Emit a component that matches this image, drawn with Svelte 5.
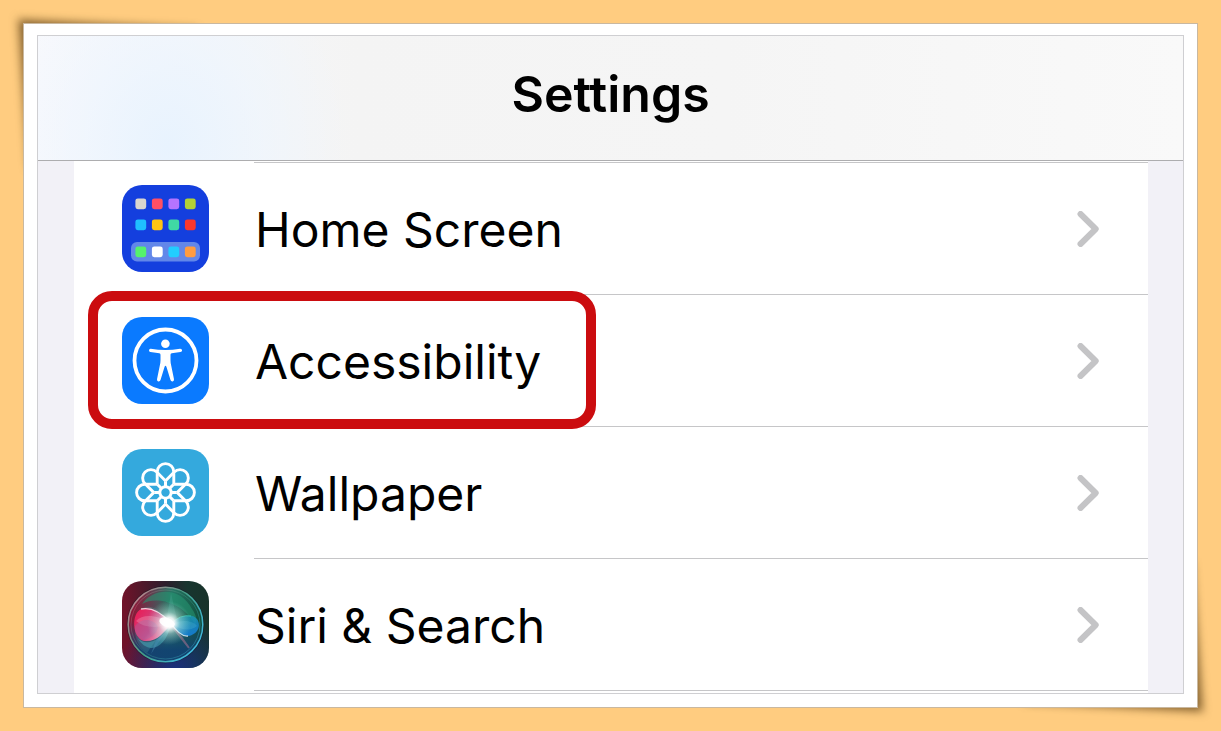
<script lang="ts">
	const apps = [
		{ id: 'home', label: 'Home Screen', highlighted: false },
		{ id: 'accessibility', label: 'Accessibility', highlighted: true },
		{ id: 'wallpaper', label: 'Wallpaper', highlighted: false },
		{ id: 'siri', label: 'Siri & Search', highlighted: false }
	];

	const dots = [
		['#d9d6cf', '#ff4f64', '#b574ff', '#b2d235'],
		['#1fbfff', '#ffc412', '#40d9a4', '#fb372d'],
		['#55f26c', '#ffffff', '#22cdff', '#ff9c40']
	];
	const dotRows = [13.4, 34.4, 61.4];
	const petals = [0, 45, 90, 135, 180, 225, 270, 315];
</script>

<main class="frame">
	<div class="photo">
		<div class="screen">
			<header class="title-bar">
				<h1>Settings</h1>
			</header>
			<nav class="settings" aria-label="Settings">
				<ul class="list">
					{#each apps as app}
						<li>
							<a class="row" class:highlighted={app.highlighted} href={`#${app.id}`}>
								<svg class="icon" viewBox="0 0 87 87" aria-hidden="true">
									{#if app.id === 'home'}
										<rect width="87" height="87" fill="#143fde" />
										<rect x="9" y="57" width="69" height="19.6" rx="6" fill="#6287e9" />
										{#each dots as line, r}
											{#each line as color, c}
												<rect
													x={13.4 + c * 16.5}
													y={dotRows[r]}
													width="10.8"
													height="10.8"
													rx="2.4"
													fill={color}
												/>
											{/each}
										{/each}
									{:else if app.id === 'accessibility'}
										<rect width="87" height="87" fill="#0a7aff" />
										<circle cx="43.5" cy="43.5" r="31" fill="none" stroke="#fff" stroke-width="3.8" />
										<circle cx="43.4" cy="26.7" r="4.3" fill="#fff" />
										<path
											fill="#fff"
											d="M28.7 31.8 Q43.5 34.2 58.1 31.8 Q60 31.7 60.1 33.3 Q60.1 34.7 58.5 35 L49.7 36.3 Q48.5 36.5 48.5 37.8 V43.5 Q48.5 46 49.3 49 L52 62.3 Q52.2 64 50.6 64.4 Q49 64.6 48.5 63 L44.4 49.7 Q43.5 47.6 42.6 49.7 L38.5 63 Q37.9 64.7 36.3 64.4 Q34.8 64 35 62.3 L37.7 49 Q38.5 46 38.5 43.5 V37.8 Q38.5 36.5 37.3 36.3 L28.4 35 Q26.9 34.7 27 33.3 Q27.1 31.7 28.7 31.8 Z"
										/>
									{:else if app.id === 'wallpaper'}
										<rect width="87" height="87" fill="#34a9dd" />
										<g fill="none" stroke="#fff" stroke-width="2.9" stroke-linejoin="round">
											{#each petals as angle}
												<g transform={`rotate(${angle} 43.5 43.5)`}>
													<path d="M35.2 35.4 V22.9 a8.3 8.3 0 0 1 16.6 0 V35.4" />
													<path d="M43.5 38 V32.2" stroke-width="3" />
												</g>
											{/each}
											<circle cx="43.5" cy="43.5" r="5.7" stroke-width="3" />
										</g>
									{:else}
										<defs>
											<linearGradient id="siri-bg" x1="0" y1="0.1" x2="1" y2="0">
												<stop offset="0" stop-color="#701329" />
												<stop offset="0.5" stop-color="#2d1e2c" />
												<stop offset="0.75" stop-color="#18352f" />
												<stop offset="1" stop-color="#183229" />
											</linearGradient>
											<radialGradient id="siri-low" cx="0.6" cy="1.05" r="0.65">
												<stop offset="0" stop-color="#16348a" stop-opacity="0.9" />
												<stop offset="1" stop-color="#16318a" stop-opacity="0" />
											</radialGradient>
											<linearGradient id="siri-orb" x1="0.05" y1="0.4" x2="0.95" y2="0.5">
												<stop offset="0" stop-color="#8c1838" />
												<stop offset="0.3" stop-color="#584653" />
												<stop offset="0.55" stop-color="#267765" />
												<stop offset="1" stop-color="#12513f" />
											</linearGradient>
											<linearGradient id="siri-orb-low" x1="0" y1="0" x2="0" y2="1">
												<stop offset="0.45" stop-color="#154371" stop-opacity="0" />
												<stop offset="0.85" stop-color="#114271" stop-opacity="0.95" />
											</linearGradient>
											<linearGradient id="siri-rim" x1="0" y1="0.1" x2="1" y2="0.8">
												<stop offset="0" stop-color="#d27c8d" />
												<stop offset="0.5" stop-color="#439e86" />
												<stop offset="1" stop-color="#3fbdea" />
											</linearGradient>
											<linearGradient id="siri-pink" x1="0" y1="0" x2="1" y2="0.6">
												<stop offset="0" stop-color="#ed174f" />
												<stop offset="0.6" stop-color="#cf4582" />
												<stop offset="1" stop-color="#f7a8c3" />
											</linearGradient>
											<linearGradient id="siri-blue" x1="0" y1="0" x2="0.4" y2="1">
												<stop offset="0" stop-color="#1e9a9f" />
												<stop offset="1" stop-color="#1583db" />
											</linearGradient>
											<radialGradient id="siri-glow">
												<stop offset="0" stop-color="#fff" />
												<stop offset="0.25" stop-color="#fff" stop-opacity="0.9" />
												<stop offset="0.5" stop-color="#e4fff8" stop-opacity="0.4" />
												<stop offset="1" stop-color="#a8eadd" stop-opacity="0" />
											</radialGradient>
										</defs>
										<rect width="87" height="87" fill="url(#siri-bg)" />
										<rect width="87" height="87" fill="url(#siri-low)" />
										<circle cx="43.5" cy="43.5" r="38.8" fill="#101725" opacity="0.5" />
										<circle cx="43.5" cy="43.5" r="37" fill="url(#siri-orb)" />
										<circle cx="43.5" cy="43.5" r="37" fill="url(#siri-orb-low)" />
										<path d="M20 23 C31 7 58 5 70 28 C75 35 75 40 73 44 C65 26 38 13 20 23 Z" fill="#269873" opacity="0.55" />
										<path d="M13 45 C11 22 36 18 44 42 L49 12 Q53 30 56 43 L43 46 L25 72 C16 66 12 56 13 45 Z" fill="#66bbae" opacity="0.2" />
										<path d="M15 56 C24 68 40 58 49 44 C42 71 24 73 15 56 Z" fill="#48b0bd" opacity="0.5" />
										<path d="M49 43 C41 31 28 25 19 28 C9 33 10 57 22 60 C36 61 42 51 49 43 Z" fill="url(#siri-pink)" />
										<path d="M14 40 C21 32 36 34 48 42 C37 48 22 47 14 40 Z" fill="#f5a2bc" opacity="0.35" />
										<path d="M13 45 C20 36 32 38 36 46 Q34 56 22 59 C15 57 12 50 13 45 Z" fill="#9a6fac" opacity="0.35" />
										<path d="M49 43 C58 34 70 32 75 38 C81 47 72 56 64 55 C57 54 53 48 49 43 Z" fill="url(#siri-blue)" opacity="0.85" />
										<path d="M51 43 C60 38 71 40 75 45 C67 51 58 49 51 43 Z" fill="#68cbe3" opacity="0.2" />
										<path d="M49 44 L67 67 L60 57 Z" fill="#cf7a9b" stroke="#cf7a9b" stroke-width="2" opacity="0.45" />
										<path d="M48 44 L29 73 L34 59 Z" fill="#4b92ba" opacity="0.4" />
										<path d="M19 28 Q33 25 48 41 Q58 56 66 55" fill="none" stroke="#fff" stroke-width="1.3" opacity="0.75" />
										<path d="M49 43 Q58 33 69 35" fill="none" stroke="#36ceb7" stroke-width="0.9" opacity="0.8" />
										<circle cx="47" cy="42" r="22" fill="url(#siri-glow)" />
										<ellipse cx="45" cy="41.5" rx="8" ry="4.6" fill="#fff" transform="rotate(20 45 41.5)" opacity="0.9" />
										<circle cx="43.5" cy="43.5" r="37.3" fill="none" stroke="url(#siri-rim)" stroke-width="1.5" />
										<circle cx="43.5" cy="43.5" r="34.5" fill="none" stroke="url(#siri-rim)" stroke-width="1" opacity="0.35" />
									{/if}
								</svg>
								<span class="label">{app.label}</span>
								<svg class="chevron" viewBox="0 0 22 36" aria-hidden="true">
									<path d="M3.5 3 L18.7 18 L3.5 33" />
								</svg>
							</a>
						</li>
					{/each}
				</ul>
			</nav>
		</div>
	</div>
</main>

<style>
	:global(body) {
		background: #ffcc80;
		font-family: Inter, 'Liberation Sans', sans-serif;
		color: #000;
	}

	.frame {
		position: relative;
		z-index: 0;
		margin: 23px;
	}

	/* lifted corners of the print */
	.frame::before,
	.frame::after {
		content: '';
		position: absolute;
		z-index: -1;
		width: 180px;
		height: 150px;
		background: rgba(60, 35, 0, 0.65);
		filter: blur(5px);
	}

	.frame::before {
		top: 6px;
		left: 6px;
		transform: skew(4deg, 3deg);
		transform-origin: bottom right;
	}

	.frame::after {
		right: 6px;
		bottom: 6px;
		transform: skew(4deg, 3deg);
		transform-origin: top left;
	}

	.photo {
		padding: 11px 13px 13px;
		border: 1px solid #c9b8a0;
		background: #fff;
	}

	.screen {
		border: 1px solid #cfcfd2;
		background: #f2f1f7;
	}

	.title-bar {
		display: flex;
		align-items: center;
		justify-content: center;
		height: 125px;
		padding-bottom: 8px;
		box-sizing: border-box;
		border-bottom: 1px solid #adadaf;
		background:
			radial-gradient(
				ellipse 180px 220px at 130px 110px,
				#e8f3fe,
				rgba(236, 245, 255, 0.6) 50%,
				rgba(245, 245, 245, 0)
			),
			linear-gradient(90deg, #f9f9fc, #f4f4f4 28%, #f5f5f5 60%, #f9f9f9);
	}

	h1 {
		margin: 0;
		font-size: 50px;
		line-height: 60px;
		font-weight: 600;
	}

	.settings {
		margin: 0 35px 0 36px;
		padding: 1px 0 2px;
		background: #fff;
	}

	.list {
		margin: 0;
		padding: 1px 0 0;
		list-style: none;
		background: linear-gradient(#c6c6c8, #c6c6c8) 180px 0 / 100% 1px no-repeat;
	}

	li {
		background: linear-gradient(#c6c6c8, #c6c6c8) 180px 100% / 100% 1px no-repeat;
	}

	.row {
		position: relative;
		display: flex;
		align-items: center;
		height: 132px;
		padding: 0 49px 2px 48px;
		box-sizing: border-box;
		color: inherit;
		text-decoration: none;
	}

	.highlighted::after {
		content: '';
		position: absolute;
		top: -4px;
		left: 14px;
		width: 508px;
		height: 138px;
		box-sizing: border-box;
		border: 10px solid #cb0c0f;
		border-radius: 24px;
	}

	.icon {
		flex: none;
		width: 87px;
		height: 87px;
		border-radius: 20px;
	}

	.label {
		flex: 1;
		margin-left: 46px;
		padding-top: 4px;
		font-size: 48px;
		line-height: 60px;
	}

	.chevron {
		width: 22px;
		height: 36px;
		padding-top: 2px;
		fill: none;
		stroke: #c4c4c6;
		stroke-width: 6;
		stroke-linecap: round;
		stroke-linejoin: round;
	}
</style>
